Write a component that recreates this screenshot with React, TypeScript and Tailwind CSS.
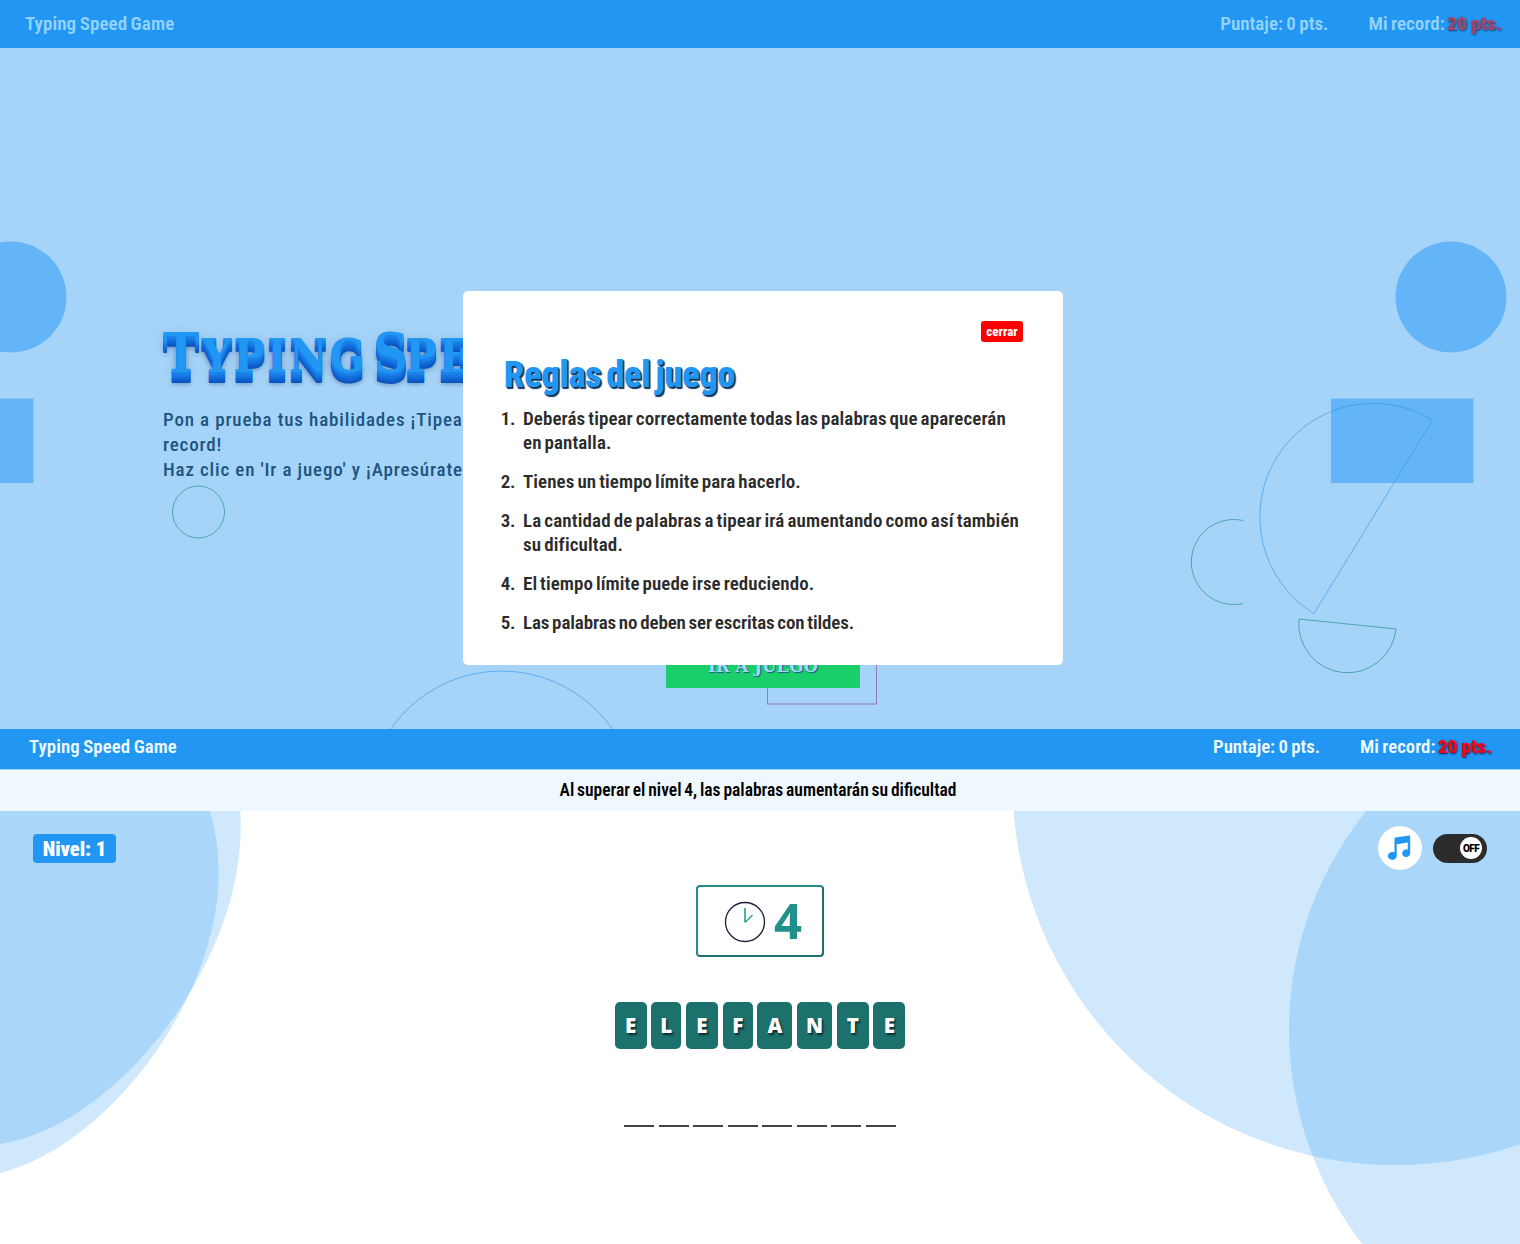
const narrow = "font-['Roboto',sans-serif] [font-stretch:75%]";

const rules = [
  { text: ["Deberás tipear correctamente todas las palabras que aparecerán", "en pantalla."], fit: "tracking-[0.08px]" },
  { text: ["Tienes un tiempo límite para hacerlo."], fit: "tracking-[0.08px]" },
  { text: ["La cantidad de palabras a tipear irá aumentando como así también", "su dificultad."], fit: "tracking-[0.13px]" },
  { text: ["El tiempo límite puede irse reduciendo."], fit: "tracking-[0.06px]" },
  { text: ["Las palabras no deben ser escritas con tildes."], fit: "tracking-[-0.12px]" },
];

const tiles = [
  ["E", "w-8"], ["L", "w-[30px]"], ["E", "w-8"], ["F", "w-[30px]"],
  ["A", "w-[35px]"], ["N", "w-[35px]"], ["T", "w-8"], ["E", "w-8"],
];

function HeroShapes() {
  return (
    <svg className="absolute inset-0" width="1520" height="681" viewBox="0 48 1520 681" fill="none">
      <g fill="#64b5f8">
        <circle cx="11" cy="297" r="55.5" />
        <circle cx="1451" cy="297" r="55.5" />
        <rect x="0" y="398.5" width="33.5" height="84.5" />
        <rect x="1331" y="398.5" width="142.5" height="84.5" />
      </g>
      <g stroke="#1f8fee" strokeOpacity="0.55">
        <path d="M1432.500 420 A113 113 0 0 0 1314 613.500 Z" />
        <circle cx="501.500" cy="806" r="135" />
      </g>
      <g stroke="#4ba5b4">
        <circle cx="198.500" cy="512" r="26" />
        <path d="M1243 520.500 A42.500 42.500 0 1 0 1243 603.500" />
        <path d="M1299 619 L1396 629 A48 48 0 0 1 1299 619 Z" />
      </g>
      <rect x="767.500" y="600.500" width="109" height="103.500" stroke="#9678b4" />
    </svg>
  );
}

function GameShapes() {
  return (
    <svg className="absolute inset-0" width="1520" height="433" viewBox="0 811 1520 433">
      <g fill="#2196f3" fillOpacity="0.215">
        <path d="M0 811 H210 Q218.600 841 218.600 873 C218.600 999 108 1146 0 1173 Z" />
        <path d="M0 811 H240.300 Q240.700 820 240.700 828 C240.700 963 118 1126 0 1144 Z" />
        <circle cx="1395.500" cy="782" r="383" />
        <circle cx="1638" cy="1030" r="349" />
      </g>
    </svg>
  );
}

function Hero() {
  return (
    <section className="relative h-[681px] overflow-hidden bg-[#a6d4f9]">
      <HeroShapes />
      <div className="relative pl-[163px] pt-[267px]">
        <h1 className="h-[76px] w-[640px] whitespace-nowrap font-['DejaVu_Serif_Condensed','DejaVu_Serif',serif] text-[46px] leading-[76px] font-bold tracking-[2.5px] text-[#2196f3] [font-stretch:condensed] [word-spacing:-11px] [text-shadow:0_1px_0_#1a84ea,0_2px_0_#1a84ea,0_3px_0_#187ee6,0_4px_0_#1678e2,0_5px_0_#1473de,0_6px_0_#126eda,0_7px_0_#1068d6,0_8px_0_#0e63d2,0_9px_0_#0c5ecc,0_10px_0_#0b59c4,0_11px_0_#0b53b8,0_12px_4px_rgba(0,30,80,0.35),0_4px_12px_rgba(0,30,80,0.25)]">
          <span className="text-[54px]">T</span>YPING <span className="text-[54px] tracking-[-3px]">S</span>PEED
        </h1>
        <p className={`${narrow} mt-4 text-[19px] leading-[25px] font-medium tracking-[0.85px] text-[#1d5480]`}>
          Pon a prueba tus habilidades ¡Tipea
          <br />
          record!
          <br />
          Haz clic en 'Ir a juego' y ¡Apresúrate!
        </p>
      </div>
      <button className="absolute left-[666px] top-[596px] h-11 w-[194px] bg-[#18cf69] font-['DejaVu_Serif_Condensed','DejaVu_Serif',serif] text-[18.500px] leading-[44px] font-bold text-[#a6d4f9] [font-stretch:condensed] [text-shadow:1px_1px_1px_#1b5d80]">
        IR A JUEGO
      </button>
      <Modal />
    </section>
  );
}

function Modal() {
  return (
    <div className={`${narrow} absolute left-[463px] top-[243px] flex h-[374px] w-[600px] flex-col rounded-[5px] bg-white px-10 pt-[30px] text-[#2b2b2b]`}>
      <button className="h-[21px] w-[42px] self-end rounded-[3px] bg-[#fd0000] text-center text-[13px] leading-[21px] font-extrabold text-white">
        cerrar
      </button>
      <h2 className="mt-2 h-[50px] whitespace-nowrap pl-px text-[36px] leading-[50px] font-black text-[#2196f3] [word-spacing:-3px] tracking-[-0.2px] [text-shadow:1px_1px_1px_#14375a,1.500px_1.500px_1px_#14375a]">
        Reglas del juego
      </h2>
      <ol className="mt-[7px] flex flex-col gap-[15px] text-[19px] leading-6 font-semibold [word-spacing:-1.500px]">
        {rules.map((rule, i) => (
          <li key={i} className="flex gap-2">
            <span className="-ml-1 w-4 text-right tracking-[-0.3px]">{i + 1}.</span>
            <span className={`whitespace-nowrap ${rule.fit}`}>
              {rule.text.map((line) => (
                <span key={line} className="block">{line}</span>
              ))}
            </span>
          </li>
        ))}
      </ol>
    </div>
  );
}

function Tile({ letter, width }: { letter: string; width: string }) {
  return (
    <span className={`${width} h-[47px] shrink-0 rounded-[5px] bg-[#1c716c] text-center font-['Open_Sans',sans-serif] text-[20.500px] leading-[46px] font-extrabold text-white [font-stretch:100%] [text-shadow:1.500px_1.500px_2px_#0b2b2b]`}>
      {letter}
    </span>
  );
}

function Game() {
  return (
    <section className="relative h-[433px] overflow-hidden bg-white">
      <GameShapes />
      <div className="relative flex h-[74px] items-center justify-between pl-[33px] pr-[33px]">
        <span className="h-[29px] w-[83px] rounded-[4px] bg-[#2196f3] text-center text-[20.500px] leading-[30px] font-black text-white">Nivel: 1</span>
        <div className="flex items-center gap-[11px]">
          <span className="flex size-11 items-center justify-center rounded-full bg-white">
            <svg className="-ml-0.5" width="24" height="26" viewBox="0 0 24 26" fill="#2196f3">
              <path d="M7.500 3.500Q7.500 2.700 8.300 2.500L22.200 .6Q23.200 .5 23.200 1.500V18.500A4 3.900 0 1 1 20.800 14.600V7.400L9.700 9.300V20.500A4.400 4 0 1 1 7.500 17.400Z" />
            </svg>
          </span>
          <span className="flex h-[29px] w-[54px] items-center justify-end rounded-full bg-[#2b2b2b] pr-[5px]">
            <span className="size-[22px] rounded-full bg-white text-center text-[10px] leading-[23px] font-black tracking-[-0.6px] text-black [font-stretch:100%]">OFF</span>
          </span>
        </div>
      </div>
      <div className="relative flex flex-col items-center">
        <div className="flex h-[72px] w-[128px] items-center rounded-[4px] border-2 border-t-[#218f85] border-r-[#1c716c] border-b-[#1c716c] border-l-[#218f85] bg-white pl-[26px]">
          <svg className="mt-0.5" width="42" height="42" viewBox="0 0 42 42" fill="none">
            <circle cx="21" cy="21" r="19.500" stroke="#211c3d" strokeWidth="1.300" />
            <path d="M21 7V21" stroke="#18a08c" strokeWidth="1.600" />
            <path d="M21 21.500 28.500 14" stroke="#18a08c" strokeWidth="1.200" />
          </svg>
          <span className="-mt-0.5 ml-2 font-['Open_Sans',sans-serif] text-[49px] leading-[68px] font-bold text-[#218f8a] [font-stretch:100%]">4</span>
        </div>
        <div className="mt-[45px] flex justify-center gap-[4.7px]">
          {tiles.map(([letter, width], i) => (
            <Tile key={i} letter={letter} width={width} />
          ))}
        </div>
        <div className="mt-[76px] flex gap-[4.6px]">
          {tiles.map((_, i) => (
            <span key={i} className="h-[1.500px] w-[30px] bg-[#444]" />
          ))}
        </div>
      </div>
    </section>
  );
}

export default function App() {
  return (
    <main className={`${narrow} h-[1244px] w-[1520px] overflow-hidden bg-white`}>
      <header className="flex h-12 items-center justify-between bg-[#2196f3] pb-px pl-[25px] pr-[18px] text-[19px] leading-5 font-semibold whitespace-nowrap text-[#95d3ff] [word-spacing:-1px]">
        <span className="tracking-[0.08px]">Typing Speed Game</span>
        <div className="flex gap-10">
          <span>Puntaje: 0 pts.</span>
          <span>
            Mi record: <b className="-ml-px font-black tracking-[0.35px] text-[#a5456d] [text-shadow:1px_1px_2px_#15406d]">20 pts.</b>
          </span>
        </div>
      </header>
      <Hero />
      <header className="flex h-10 items-center justify-between bg-[#2196f3] pb-[5px] pl-[29px] pr-[28px] text-[18.800px] leading-5 font-semibold whitespace-nowrap text-[#effaff] [word-spacing:-1px]">
        <span className="tracking-[0.1px]">Typing Speed Game</span>
        <div className="flex gap-10">
          <span>Puntaje: 0 pts.</span>
          <span>
            Mi record: <b className="-ml-px font-black tracking-[0.35px] text-[#f50810] [text-shadow:1px_1px_2px_#20104d]">20 pts.</b>
          </span>
        </div>
      </header>
      <p className="h-[42px] border-t border-[#a6d4f9] bg-[#f0f8ff] pr-1 text-center text-[17.500px] leading-[41px] font-semibold text-black [word-spacing:-1.200px]">
        Al superar el nivel 4, las palabras aumentarán su dificultad
      </p>
      <Game />
    </main>
  );
}
